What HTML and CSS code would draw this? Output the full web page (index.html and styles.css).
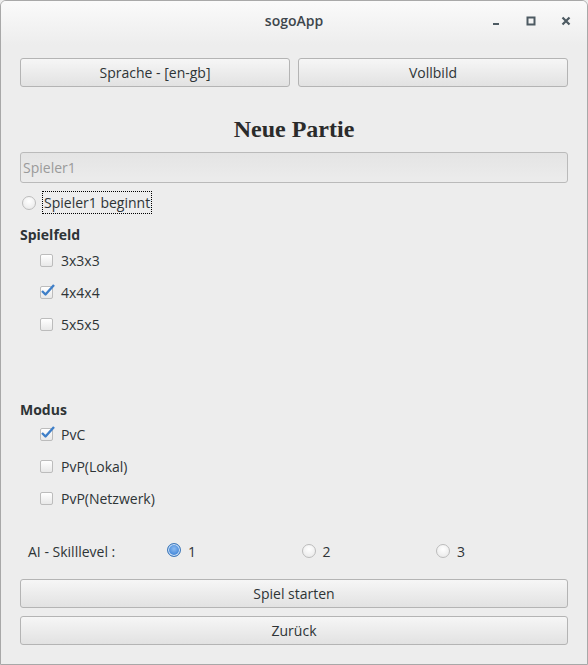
FILE: index.html
```html
<!DOCTYPE html>
<html lang="de">
<head>
<meta charset="utf-8">
<title>sogoApp</title>
<link rel="stylesheet" href="styles.css">
</head>
<body>
<div class="window">
  <div class="titlebar">
    <span class="title">sogoApp</span>
    <div class="controls">
      <span class="ctl"><svg width="10" height="10" viewBox="0 0 10 10"><rect x="2" y="7" width="6" height="2" fill="#4d5a62"/></svg></span>
      <span class="ctl"><svg width="10" height="10" viewBox="0 0 10 10"><rect x="1.5" y="1.5" width="7" height="7" fill="none" stroke="#4d5a62" stroke-width="2"/></svg></span>
      <span class="ctl"><svg width="10" height="10" viewBox="0 0 10 10"><path d="M1.5 1.5 L8.5 8.5 M8.5 1.5 L1.5 8.5" stroke="#4d5a62" stroke-width="2.2"/></svg></span>
    </div>
  </div>
  <div class="content">
    <div class="toprow">
      <button class="btn">Sprache - [en-gb]</button>
      <button class="btn">Vollbild</button>
    </div>
    <h1 class="heading">Neue Partie</h1>
    <div class="field">Spieler1</div>
    <div class="starter">
      <span class="radio"></span>
      <span class="focuslabel">Spieler1 beginnt</span>
    </div>
    <div class="section">Spielfeld</div>
    <div class="checks first">
      <div class="check"><span class="box"></span><span>3x3x3</span></div>
      <div class="check"><span class="box"><svg class="tick" width="16" height="14" viewBox="0 0 16 14"><path d="M2 8 L5.5 11.5 L14 2" fill="none" stroke="#3f7fc8" stroke-width="2.4" stroke-linejoin="round"/></svg></span><span>4x4x4</span></div>
      <div class="check"><span class="box"></span><span>5x5x5</span></div>
    </div>
    <div class="section modus">Modus</div>
    <div class="checks">
      <div class="check"><span class="box"><svg class="tick" width="16" height="14" viewBox="0 0 16 14"><path d="M2 8 L5.5 11.5 L14 2" fill="none" stroke="#3f7fc8" stroke-width="2.4" stroke-linejoin="round"/></svg></span><span>PvC</span></div>
      <div class="check"><span class="box"></span><span>PvP(Lokal)</span></div>
      <div class="check"><span class="box"></span><span>PvP(Netzwerk)</span></div>
    </div>
    <div class="skill">
      <span class="skilllabel">AI - Skilllevel :</span>
      <span class="opt"><span class="radio on"></span><span>1</span></span>
      <span class="opt"><span class="radio"></span><span>2</span></span>
      <span class="opt"><span class="radio"></span><span>3</span></span>
    </div>
    <button class="btn wide">Spiel starten</button>
    <button class="btn wide second">Zurück</button>
  </div>
</div>
</body>
</html>
```
FILE: styles.css
```css
html, body {
  margin: 0;
  padding: 0;
  background: #ededed;
}
.window {
  width: 588px;
  height: 665px;
  box-sizing: border-box;
  border: 1px solid #a8a8a8;
  border-radius: 6px 6px 0 0;
  background: #ededed;
  font-family: "Open Sans", "Noto Sans", sans-serif;
  font-size: 13px;
  color: #2e3436;
  overflow: hidden;
}
.titlebar {
  position: relative;
  height: 44px;
  background: linear-gradient(#fafafa, #ededed);
  display: flex;
  align-items: center;
  justify-content: center;
}
.title {
  font-weight: 600;
  font-size: 14px;
  color: #3d464c;
  margin-top: -5px;
}
.controls {
  position: absolute;
  right: 14px;
  top: 15px;
  display: flex;
  gap: 23px;
}
.ctl { display: block; width: 12px; height: 12px; }
.ctl svg { display: block; }
.content {
  padding: 13px 19px 0 19px;
  display: flex;
  flex-direction: column;
}
.toprow {
  display: flex;
  gap: 8px;
}
.btn {
  flex: 1;
  height: 29px;
  border: 1px solid #b4b4b4;
  border-radius: 3px;
  background: linear-gradient(#f6f6f6, #e2e2e2);
  font-family: inherit;
  font-size: 14px;
  color: #2e3436;
  padding: 0;
}
.heading {
  margin: 29px 0 0 0;
  height: 36px;
  font-family: "Liberation Serif", serif;
  font-size: 24px;
  font-weight: bold;
  text-align: center;
  color: #2b2b2b;
  line-height: 26px;
}
.field {
  height: 31px;
  box-sizing: border-box;
  border: 1px solid #bababa;
  border-radius: 3px;
  background: linear-gradient(#e4e4e4, #ececec);
  color: #9a9a9a;
  padding-left: 2px;
  line-height: 29px;
  font-size: 14px;
}
.starter {
  display: flex;
  align-items: center;
  height: 23px;
  margin-top: 8px;
}
.radio {
  display: inline-block;
  width: 12px;
  height: 12px;
  border: 1px solid #bcbcbc;
  border-radius: 50%;
  background: radial-gradient(circle at 50% 35%, #ffffff, #e6e6e6);
  box-sizing: content-box;
  flex: none;
}
.starter .radio { margin-left: 2px; }
.radio.on {
  border-color: #3e78b8;
  background: radial-gradient(circle at 50% 40%, #8cbbf0 0, #4a8cdb 60%, #3a74c0 100%);
  box-shadow: inset 0 0 0 1px #d6e6f8;
  margin-top: -3px;
}
.focuslabel {
  margin-left: 6px;
  border: 1px dotted #000;
  padding: 0 1px 0 1px;
  height: 21px;
  line-height: 21px;
  font-size: 14px;
}
.section {
  font-weight: bold;
  margin-top: 11px;
  height: 20px;
  line-height: 20px;
  font-size: 14px;
}
.modus { margin-top: 60px; }
.checks {
  display: flex;
  flex-direction: column;
  padding-left: 20px;
  margin-top: -2px;
}
.checks.first { margin-top: -1px; }
.check {
  display: flex;
  align-items: center;
  height: 32px;
  font-size: 14px;
}
.box {
  position: relative;
  width: 11px;
  height: 11px;
  border: 1px solid #bcbcbc;
  border-radius: 2px;
  background: linear-gradient(#ffffff, #e8e8e8);
  margin-right: 8px;
  flex: none;
}
.tick {
  position: absolute;
  left: -1px;
  top: -4px;
}
.skill {
  display: flex;
  align-items: center;
  height: 24px;
  margin-top: 25px;
  font-size: 14px;
}
.skilllabel {
  width: 138px;
  padding-left: 8px;
  box-sizing: border-box;
  flex: none;
  margin-right: 9px;
}
.opt {
  display: flex;
  align-items: center;
  gap: 7px;
  width: 134.5px;
  flex: none;
}
.wide {
  flex: none;
  width: 100%;
  margin-top: 16px;
}
.wide.second { margin-top: 8px; }
```
